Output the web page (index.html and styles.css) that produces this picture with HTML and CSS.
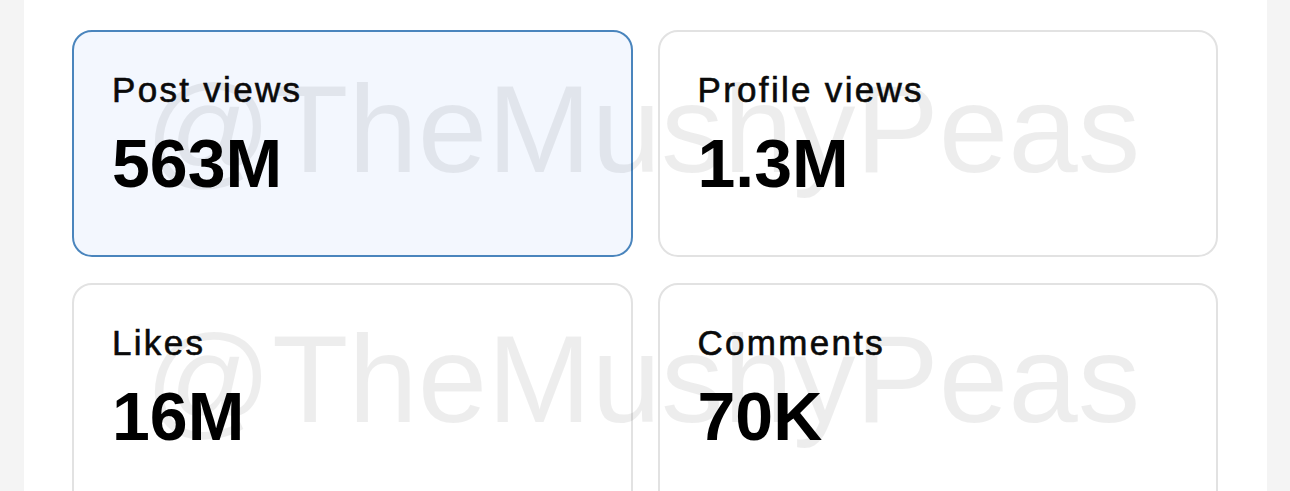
FILE: index.html
```html
<!DOCTYPE html>
<html lang="en">
<head>
<meta charset="utf-8">
<title>Stats</title>
<link rel="stylesheet" href="styles.css">
</head>
<body>
<div class="frame">
  <main class="panel">
    <div class="grid">
      <section class="card card--active">
        <div class="label">Post views</div>
        <div class="value">563M</div>
      </section>
      <section class="card">
        <div class="label">Profile views</div>
        <div class="value">1.3M</div>
      </section>
      <section class="card">
        <div class="label">Likes</div>
        <div class="value">16M</div>
      </section>
      <section class="card">
        <div class="label">Comments</div>
        <div class="value">70K</div>
      </section>
    </div>
    <div class="watermark" aria-hidden="true">
      <div class="wm-line">@TheMushyPeas</div>
      <div class="wm-line">@TheMushyPeas</div>
    </div>
  </main>
</div>
</body>
</html>
```

FILE: styles.css
```css
* { box-sizing: border-box; }
html, body {
  margin: 0;
  padding: 0;
  height: 491px;
  overflow: hidden;
  background: #f4f4f4;
  font-family: "Liberation Sans", Arial, sans-serif;
}
.frame {
  display: flex;
  justify-content: flex-start;
  padding-left: 24px;
  height: 491px;
}
.panel {
  position: relative;
  width: 1243px;
  height: 491px;
  background: #ffffff;
  padding: 30px 49px 0 48px;
  overflow: hidden;
}
.grid {
  display: grid;
  grid-template-columns: 1fr 1fr;
  column-gap: 25px;
  row-gap: 26px;
}
.card {
  height: 227px;
  border: 2px solid #e2e2e2;
  border-radius: 20px;
  background: #ffffff;
  padding: 38px 0 0 38px;
}
.card--active {
  background: #f3f7fe;
  border-color: #4a85bd;
}
.label {
  font-size: 35px;
  line-height: 40px;
  font-weight: 400;
  color: #0a0a0a;
  letter-spacing: 2.3px;
  -webkit-text-stroke: 0.6px #0a0a0a;
}
.value {
  margin-top: 15px;
  font-size: 68px;
  line-height: 76px;
  font-weight: 700;
  color: #000;
  letter-spacing: 0;
}
.watermark {
  position: absolute;
  left: 121px;
  top: 66px;
  pointer-events: none;
  color: rgba(0, 0, 0, 0.07);
  font-size: 125px;
}
.wm-line {
  height: 250px;
  line-height: 125px;
  white-space: nowrap;
}
```
